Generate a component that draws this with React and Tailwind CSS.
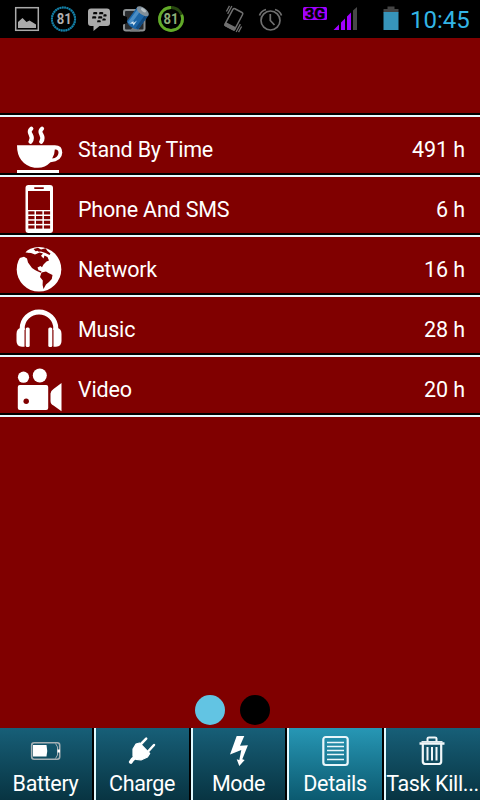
import clsx from 'clsx'

function CupIcon() {
  return (
    <svg width="68" height="56" viewBox="0 0 68 56" fill="#fff">
      <path d="M17 28.2H54.5Q62.3 28 62.3 35.5Q62 44.5 50.5 45.2Q45 50.8 38 50.8H34.500Q17 47 17 28.2Z" />
      <path d="M54.8 32.5Q58.6 32 58.5 36Q58 41 52.2 41.4Q54.8 37.5 54.8 32.5Z" fill="#800000" />
      <rect x="17" y="53" width="42" height="3" />
      <path d="M31.300 11.700C26 16.500 35.500 18.500 30.500 24.700M42 11.700C36.700 16.500 46.200 18.500 41.200 24.700" fill="none" stroke="#fff" strokeWidth="4.200" strokeLinecap="round" />
    </svg>
  )
}

function PhoneIcon() {
  return (
    <svg width="68" height="56" viewBox="0 0 68 56" fill="#fff">
      <rect x="25.500" y="8" width="27.500" height="48" rx="3" />
      <g fill="#800000">
        <rect x="34" y="10.300" width="10" height="1.600" rx="0.800" />
        <rect x="28" y="14" width="22" height="19" />
        {[34.3, 39, 43.7, 48.4].map(y => (
          <g key={y}>
            <rect x="28.300" y={y} width="6.200" height="3.200" />
            <rect x="36" y={y} width="6.400" height="3.200" />
            <rect x="43.900" y={y} width="6.200" height="3.200" />
          </g>
        ))}
      </g>
    </svg>
  )
}

function GlobeIcon() {
  return (
    <svg width="68" height="56" viewBox="0 0 68 56" fill="#fff">
      <circle cx="39" cy="32.300" r="22.300" />
      <g fill="#800000">
        <path d="M17.500 20.500L20.500 20.800L24 19.800L27 21.500L28 25.500L32 31L35 33L38 34.600L40.800 35.800L41.500 34.200L38.500 33.200L37.500 30.500L40.500 29L42 30.300L43.500 27.500L46.500 24.500L49 23.500L47.500 20L44.500 18.500L43.500 21.500L41 18.800L43 16.500L39.500 15.500L35 17.500L31 16L25.500 15.500L30 10L24 9L17 15Z" />
        <path d="M41.500 35.600L46 34.600L48.500 36L52.500 38L51.800 42L49 45L46 47.500L43.500 52L42.600 48L42.800 43.500L40 40Z" />
        <path d="M33.500 12L38 10.700L41 12.500L45.500 11.200L47.500 14L50.500 16.500L49.500 18L45.500 16L41 14.500L36 14.700Z" />
      </g>
      <path d="M27 14.500L31.500 12.500L33 14.300L28.500 15.500ZM34 15L37.500 13.800L39 15.500L35.500 16.500Z" />
    </svg>
  )
}

function HeadphonesIcon() {
  return (
    <svg width="68" height="56" viewBox="0 0 68 56" fill="#fff">
      <path d="M22.200 33V31.500A16.800 16.600 0 0 1 55.800 31.500V33" fill="none" stroke="#fff" strokeWidth="5" />
      <path d="M24.500 31H21Q16.500 31.500 16.500 37V44Q16.500 49.700 22 49.700H24.500ZM53.500 31H57Q61.500 31.500 61.500 37V44Q61.500 49.700 56 49.700H53.500Z" />
      <rect x="25.700" y="30.500" width="4" height="19.400" rx="1.500" />
      <rect x="48.300" y="30.500" width="4" height="19.400" rx="1.500" />
    </svg>
  )
}

function CameraIcon() {
  return (
    <svg width="68" height="56" viewBox="0 0 68 56" fill="#fff">
      <circle cx="23.500" cy="20.200" r="5.600" />
      <circle cx="39.800" cy="18.500" r="7" />
      <rect x="17.800" y="28" width="30.400" height="25" rx="2" />
      <path d="M61.500 26V54.200L53.500 48.500Q50.500 47 50.500 44V36.500Q50.500 34 53.500 32Z" />
      <circle cx="26.200" cy="44.300" r="2.700" fill="#800000" />
    </svg>
  )
}

function BatteryIcon() {
  return (
    <svg className="self-start" width="92" height="40" viewBox="0 0 92 40" fill="none">
      <rect x="31.700" y="14.700" width="28" height="16.600" rx="2.500" stroke="#a7b1b5" strokeWidth="1.600" />
      <path d="M33 17H46.500Q48 23 46.500 28.500H33Z" fill="#fff" />
      <path d="M55.500 15.500L57.500 19V27L55.500 30.500" stroke="#a7b1b5" />
      <rect x="57.500" y="21.500" width="2.500" height="3" fill="#fff" />
    </svg>
  )
}

function PlugIcon() {
  return (
    <svg className="self-start" width="92" height="40" viewBox="0 0 92 40" fill="none" stroke="#fff" strokeLinecap="round">
      <path d="M37 21L40 16L43.500 15L53.700 25.500L51.500 29L45 32L40 31.300L37 28Z" fill="#fff" strokeWidth="1.200" strokeLinejoin="round" />
      <path d="M44.500 16.500L50.200 10.700M52.500 23L58 17" strokeWidth="2.500" />
      <path d="M40 28.500L36.500 31.500L34.800 34" strokeWidth="3.800" />
    </svg>
  )
}

function BoltIcon() {
  return (
    <svg className="self-start" width="92" height="40" viewBox="0 0 92 40" fill="#fff">
      <path d="M43.700 8H51.300L47 17.700L54.900 17.200L49.300 31.300L51.700 32L46.300 37.900L43.700 31.300L46.300 32L48.300 22L37 26.400Z" />
    </svg>
  )
}

function DetailsIcon() {
  return (
    <svg className="self-start" width="92" height="40" viewBox="0 0 92 40" fill="none" stroke="#e9f6fa">
      <rect x="34.300" y="9" width="24.400" height="28" rx="2.500" strokeWidth="2.200" />
      <path d="M38 14.500H55M38 18.500H55M38 22.500H55M38 26.500H55M38 31.500H55" strokeWidth="1.700" />
    </svg>
  )
}

function TrashIcon() {
  return (
    <svg className="self-start" width="92" height="40" viewBox="0 0 92 40" fill="none" stroke="#f1f7f9">
      <path d="M41.500 13.500V10.500Q41.500 9.500 43 9.500H49Q50.500 9.500 50.500 10.500V13.500" strokeWidth="2" />
      <path d="M33.500 15.500H58.500" strokeWidth="2.500" />
      <path d="M35.500 13.800H56.500" strokeWidth="1.500" />
      <path d="M36.800 16V33.500Q36.800 36 39.500 36H52.500Q55.200 36 55.200 33.500V16" strokeWidth="2.200" />
      <path d="M41.500 19V32.500M46 19V32.500M50.500 19V32.500" strokeWidth="2" />
    </svg>
  )
}

function StatusIcons() {
  return (
    <svg width="408" height="38" viewBox="0 0 408 38" className="shrink-0" fontFamily="Roboto, sans-serif">
      {/* Gallery */}
      <rect x="15.700" y="7.700" width="22.600" height="22.600" fill="none" stroke="#aaa" strokeWidth="1.500" />
      <path d="M18 28V22L22.500 18L26.500 22L29.500 20.500L32 22L36 24.500V28Z" fill="#aaa" />

      {/* Battery level rings */}
      <circle cx="63.500" cy="19" r="11.600" fill="none" stroke="#0a455b" strokeWidth="2" />
      <circle cx="63.500" cy="19" r="11.600" fill="none" stroke="#1585ae" strokeWidth="2" strokeDasharray="1.500 0.900" />
      <text x="64.300" y="24" fontSize="14" fontWeight="700" fill="#b0b0b0" textAnchor="middle" textLength="15" lengthAdjust="spacingAndGlyphs">81</text>
      <circle cx="171" cy="19" r="11.500" fill="none" stroke="#27470f" strokeWidth="2.800" />
      <circle cx="171" cy="19" r="11.500" fill="none" stroke="#62aa29" strokeWidth="2.800" pathLength="100" strokeDasharray="81 19" strokeDashoffset="-19" transform="rotate(-90 171 19)" />
      <text x="171" y="24" fontSize="14" fontWeight="700" fill="#8fae78" textAnchor="middle" textLength="15" lengthAdjust="spacingAndGlyphs">81</text>

      {/* Messenger */}
      <path d="M91 8.500H107Q110 8.500 110 11.500V23Q110 26 107 26H99.500L93.500 31V26H91Q88 26 88 23V11.500Q88 8.500 91 8.500Z" fill="#aaa" />
      <path d="M93.500 12H96.500Q98 12.500 97 14.300H93ZM99.500 12H102.500Q104 12.500 103 14.300H99ZM92.500 16.200H95.500Q97 16.700 96 18.500H92ZM98.500 16.200H101.500Q103 16.700 102 18.500H98ZM103.700 14.200H106Q107.300 14.700 106.300 16.400H103.200ZM97.500 20.200H100Q101.500 20.700 100.500 22.300H97ZM102.700 18.500H105Q106.500 19 105.500 20.600H102.200Z" fill="#050505" />

      {/* Battery app */}
      <rect x="124" y="10" width="20.500" height="20.500" rx="2" fill="#282b2e" stroke="#8c9092" strokeWidth="2" />
      <path d="M122 15L127 17V23L122 25Z" fill="#000" />
      <path d="M130 31.500L132 28H138L140 31.500Z" fill="#777b7d" />
      <g transform="rotate(36 137.500 18.500)">
        <path d="M130.500 9V27Q137.500 31.500 144.500 27V9Z" fill="#1c65a7" />
        <rect x="132" y="11" width="3.500" height="16.500" fill="#4a8dc5" />
        <rect x="141.500" y="11" width="3" height="16" fill="#124a80" />
        <ellipse cx="137.500" cy="9.500" rx="7" ry="3.500" fill="#82909a" />
        <ellipse cx="137.500" cy="8.300" rx="3" ry="1.500" fill="#b8c0c5" />
      </g>
      <path d="M130 23.500L133.500 21L133.500 23L137 20.500L133.500 25.800L133 23.800Z" fill="#d7e9f4" />

      {/* Vibrate */}
      <g transform="rotate(28 234 19)" stroke="#707070" fill="none">
        <rect x="228.500" y="9.500" width="11" height="19.500" rx="1.500" strokeWidth="1.500" />
        <rect x="228" y="25.500" width="12" height="4" rx="1" fill="#707070" stroke="none" />
        <path d="M226 8.500V17.500M223.800 9.500V16M242 20.500V29.500M244.200 22V28.500" strokeWidth="1.300" />
      </g>

      {/* Alarm */}
      <g stroke="#707070" fill="none" strokeWidth="1.700">
        <circle cx="270.500" cy="20.500" r="9.500" />
        <path d="M270.300 14V20.500L274.500 25M259.500 15.500Q261 11 266 9.500M281.500 15.500Q280 11 275 9.500" />
      </g>

      {/* Signal */}
      <rect x="303" y="7" width="24" height="13" rx="1.500" fill="#a100ff" />
      <text x="315" y="18.800" fontSize="15" fontWeight="700" fill="#000" stroke="#000" strokeWidth="0.600" textAnchor="middle" textLength="20" lengthAdjust="spacingAndGlyphs">3G</text>
      <path d="M333.500 30L339 24.500V30ZM341 30V22.500L345 18.500V30ZM347 30V16.500L351 12.500V30Z" fill="#a100ff" />
      <path d="M353 30V10.500L357 7V30Z" fill="#484848" />

      {/* Battery */}
      <path d="M383.500 9H387.500V6.500H394.500V9H398.500V12.500H383.500Z" fill="#444" />
      <rect x="383.500" y="12" width="15" height="18" fill="#3795bb" />
    </svg>
  )
}

const rows = [
  { label: 'Stand By Time', value: '491 h', Icon: CupIcon },
  { label: 'Phone And SMS', value: '6 h', Icon: PhoneIcon },
  { label: 'Network', value: '16 h', Icon: GlobeIcon },
  { label: 'Music', value: '28 h', Icon: HeadphonesIcon },
  { label: 'Video', value: '20 h', Icon: CameraIcon },
]

const tabs = [
  { label: 'Battery', Icon: BatteryIcon },
  { label: 'Charge', Icon: PlugIcon },
  { label: 'Mode', Icon: BoltIcon },
  { label: 'Details', Icon: DetailsIcon },
  { label: 'Task Kill...', Icon: TrashIcon },
]

export default function App() {
  return (
    <div className="w-[480px] h-[800px] flex flex-col overflow-hidden bg-[#800000] text-white font-[Roboto,sans-serif]">
      {/* Status bar */}
      <header className="h-[38px] shrink-0 bg-black flex items-center">
        <StatusIcons />
        <span className="text-2xl leading-[38px] pt-[2px] pl-[2px] text-[#33b5e5] whitespace-nowrap">10:45</span>
      </header>

      {/* Usage list */}
      <main className="flex-1 pt-[75px] flex flex-col">
        <div className="h-1 border-t-2 border-b-2 border-t-black border-b-[#e8faff]" />
        {rows.map(({ label, value, Icon }) => (
          <div key={label}>
            <div className="h-14 flex items-center pr-[15px]">
              <Icon />
              <span className="pl-[10px] pt-[10px] flex-1 text-[21.5px] leading-7 tracking-[-0.2px]">{label}</span>
              <span className="pt-[10px] text-[21.5px] leading-7 tracking-[-0.1px]">{value}</span>
            </div>
            <div className="h-1 border-t-2 border-b-2 border-t-black border-b-[#e8faff]" />
          </div>
        ))}
      </main>

      {/* Page indicator */}
      <div className="h-[33px] flex gap-[15px] pl-[195px]">
        <div className="size-[30px] rounded-full bg-[#62c4e3]" />
        <div className="size-[30px] rounded-full bg-black" />
      </div>

      {/* Bottom tabs */}
      <nav className="h-[72px] shrink-0 grid grid-cols-[96px_97px_96px_97px_94px]">
        {tabs.map(({ label, Icon }, i) => (
          <div key={label} className="flex min-w-0">
            <div
              className={clsx(
                'flex-1 min-w-0 flex flex-col items-center bg-linear-to-b',
                label === 'Details' ? 'from-[#2797b5] to-[#0b5a70]' : 'from-[#175f78] to-[#083442]'
              )}
            >
              <Icon />
              <span className="pr-px text-[21.5px] leading-8 tracking-[-0.35px] whitespace-nowrap">{label}</span>
            </div>
            {i < tabs.length - 1 && <div className="w-1 border-l-2 border-r-2 border-l-black border-r-[#e0faff]" />}
          </div>
        ))}
      </nav>
    </div>
  )
}
